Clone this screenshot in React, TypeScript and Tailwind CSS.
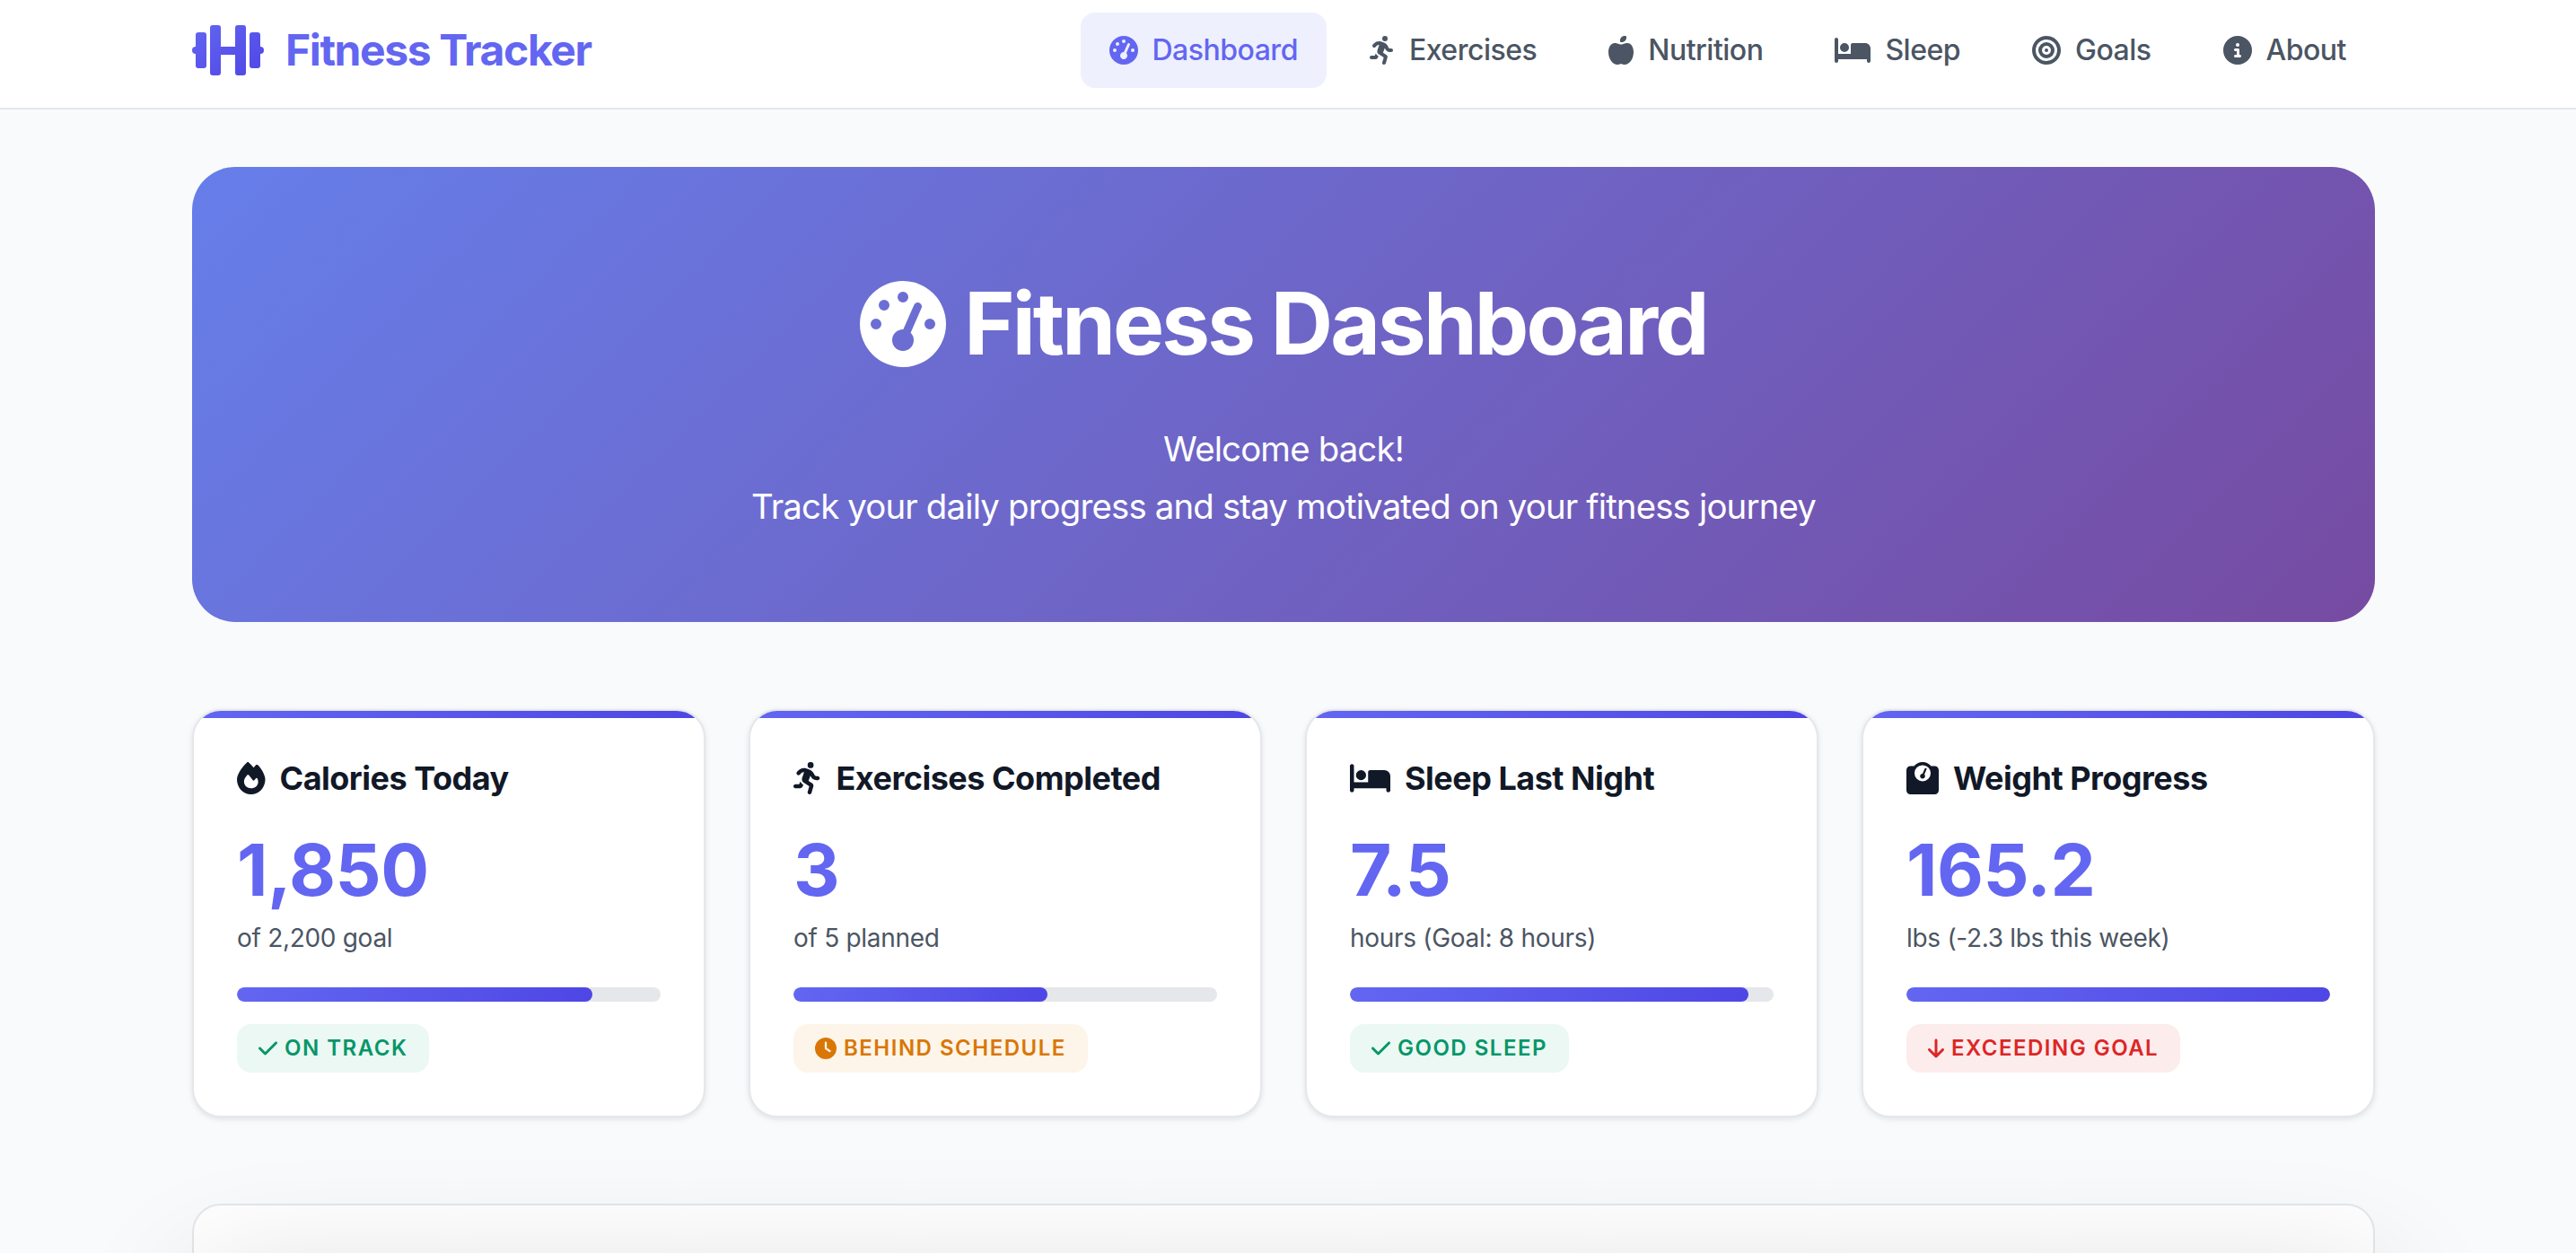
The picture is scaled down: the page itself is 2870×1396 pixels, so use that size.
import { FaArrowDown, FaCheck, FaClock, FaWeightScale, FaBed, FaFire, FaPersonRunning, FaGaugeHigh, FaAppleWhole, FaBullseye, FaCircleInfo } from 'react-icons/fa6'
import type { ComponentType } from 'react'

type IconType = ComponentType<{ className?: string }>

const navItems: { label: string; icon: IconType; iconClass: string; active?: boolean }[] = [
  { label: 'Dashboard', icon: FaGaugeHigh, iconClass: 'w-8', active: true },
  { label: 'Exercises', icon: FaPersonRunning, iconClass: 'w-7' },
  { label: 'Nutrition', icon: FaAppleWhole, iconClass: 'w-7' },
  { label: 'Sleep', icon: FaBed, iconClass: 'w-10' },
  { label: 'Goals', icon: FaBullseye, iconClass: 'w-8' },
  { label: 'About', icon: FaCircleInfo, iconClass: 'w-8' },
]

const statusStyles = {
  good: 'bg-[#ebf8f3] text-[#059669]',
  warn: 'bg-[#fdf5e9] text-[#d97706]',
  bad: 'bg-[#fdecec] text-[#dc2626]',
}

const stats: {
  title: string
  icon: IconType
  iconClass: string
  value: string
  sub: string
  progress: number
  status: string
  statusIcon: IconType
  statusIconClass: string
  tone: keyof typeof statusStyles
}[] = [
  { title: 'Calories Today', icon: FaFire, iconClass: 'w-[31.5px]', value: '1,850', sub: 'of 2,200 goal', progress: 84, status: 'ON TRACK', statusIcon: FaCheck, statusIconClass: 'w-[21px]', tone: 'good' },
  { title: 'Exercises Completed', icon: FaPersonRunning, iconClass: 'w-[31.5px]', value: '3', sub: 'of 5 planned', progress: 60, status: 'BEHIND SCHEDULE', statusIcon: FaClock, statusIconClass: 'w-6', tone: 'warn' },
  { title: 'Sleep Last Night', icon: FaBed, iconClass: 'w-[45px]', value: '7.5', sub: 'hours (Goal: 8 hours)', progress: 94, status: 'GOOD SLEEP', statusIcon: FaCheck, statusIconClass: 'w-[21px]', tone: 'good' },
  { title: 'Weight Progress', icon: FaWeightScale, iconClass: 'w-9', value: '165.2', sub: 'lbs (-2.3 lbs this week)', progress: 100, status: 'EXCEEDING GOAL', statusIcon: FaArrowDown, statusIconClass: 'w-[18px]', tone: 'bad' },
]

function Logo() {
  return (
    <svg viewBox="0 0 80 56" className="h-14 w-20 shrink-0">
      <defs>
        <linearGradient id="logo-grad" x1="0" y1="0" x2="1" y2="1">
          <stop offset="0" stopColor="#6366f1" />
          <stop offset="1" stopColor="#4f46e5" />
        </linearGradient>
      </defs>
      <path
        fill="url(#logo-grad)"
        d="M7 8h6a3 3 0 0 1 3 3v34a3 3 0 0 1-3 3H7a3 3 0 0 1-3-3V32a4 4 0 0 1 0-8V11a3 3 0 0 1 3-3zM23 0h6a3 3 0 0 1 3 3v21h16V3a3 3 0 0 1 3-3h6a3 3 0 0 1 3 3v50a3 3 0 0 1-3 3h-6a3 3 0 0 1-3-3V33H32v20a3 3 0 0 1-3 3h-6a3 3 0 0 1-3-3V3a3 3 0 0 1 3-3zM67 8h6a3 3 0 0 1 3 3v13a4 4 0 0 1 0 8v13a3 3 0 0 1-3 3h-6a3 3 0 0 1-3-3V11a3 3 0 0 1 3-3z"
      />
    </svg>
  )
}

function StatCard({ stat }: { stat: (typeof stats)[number] }) {
  const Icon = stat.icon
  const StatusIcon = stat.statusIcon
  return (
    <div className="relative overflow-hidden rounded-[32px] border-2 border-[#e5e7eb] bg-white p-12 shadow-[0_2px_6px_rgba(0,0,0,0.1)]">
      <div className="absolute inset-x-0 top-0 h-2 bg-gradient-to-r from-[#6366f1] to-[#4f46e5]" />
      <div className="flex items-center gap-4 text-[36px] leading-[54px] font-bold tracking-[-0.5px] text-[#111827]">
        <Icon className={`h-9 shrink-0 ${stat.iconClass}`} />
        <span>{stat.title}</span>
      </div>
      <div className="mt-[27px] text-[80px] leading-[96px] font-bold tracking-[-0.5px] text-[#6366f1]">{stat.value}</div>
      <div className="mt-[6px] text-[28px] leading-[45px] tracking-[-0.3px] text-[#4b5563]">{stat.sub}</div>
      <div className="mt-8 h-4 overflow-hidden rounded-full bg-[#e5e7eb]">
        <div
          className="h-full rounded-full bg-gradient-to-r from-[#6366f1] to-[#4f46e5]"
          style={{ width: `${stat.progress}%` }}
        />
      </div>
      <div className={`mt-[25px] flex w-fit items-center gap-2 rounded-2xl px-6 py-3 text-[24px] leading-[30px] font-semibold tracking-[1.5px] ${statusStyles[stat.tone]}`}>
        <StatusIcon className={`h-6 shrink-0 ${stat.statusIconClass}`} />
        <span>{stat.status}</span>
      </div>
    </div>
  )
}

export default function App() {
  return (
    <div className="relative h-[1396px] overflow-hidden bg-[#f9fafb] font-['Inter',sans-serif]">
      <header className="border-b-2 border-[#e5e7eb] bg-white pt-[14px] pb-[22px] pl-[214px] pr-[224px]">
        <div className="flex items-center justify-between">
          <div className="flex items-center gap-6 text-[48px] font-bold tracking-[-1.4px] text-[#6366f1]">
            <Logo />
            <span className="leading-[56px]">Fitness Tracker</span>
          </div>
          <nav className="flex items-center gap-4">
            {navItems.map((item) => {
              const Icon = item.icon
              return (
                <a
                  key={item.label}
                  className={`flex items-center gap-4 rounded-2xl px-8 py-4 text-[32px] leading-[52px] font-medium tracking-[-0.5px] ${
                    item.active ? 'bg-[#eef0fd] text-[#6366f1]' : 'text-[#4b5563]'
                  }`}
                >
                  <Icon className={`h-8 shrink-0 ${item.iconClass}`} />
                  <span>{item.label}</span>
                </a>
              )
            })}
          </nav>
        </div>
      </header>

      <main className="pt-16 pl-[214px] pr-[224px]">
        <section className="flex h-[507px] flex-col items-center rounded-[48px] bg-[linear-gradient(135deg,#667eea_0%,#764ba2_100%)] pt-[117px] text-white">
          <h1 className="flex items-center gap-5 text-[96px] leading-[115px] font-bold tracking-[-2.9px]">
            <FaGaugeHigh className="h-24 w-24 shrink-0" />
            <span>Fitness Dashboard</span>
          </h1>
          <p className="mt-[50px] text-center text-[38.4px] leading-[64px] tracking-[-0.85px]">
            Welcome back!
            <br />
            Track your daily progress and stay motivated on your fitness journey
          </p>
        </section>

        <section className="mt-[97px] grid grid-cols-4 gap-12">
          {stats.map((stat) => (
            <StatCard key={stat.title} stat={stat} />
          ))}
        </section>

        <section className="mt-24 h-[300px] rounded-[32px] border-2 border-[#e5e7eb] bg-white" />
      </main>

      <div className="pointer-events-none absolute inset-x-[214px] top-[1425px] h-[400px] rounded-[32px] shadow-[0_0_140px_rgba(0,0,0,0.16)]" />
    </div>
  )
}
